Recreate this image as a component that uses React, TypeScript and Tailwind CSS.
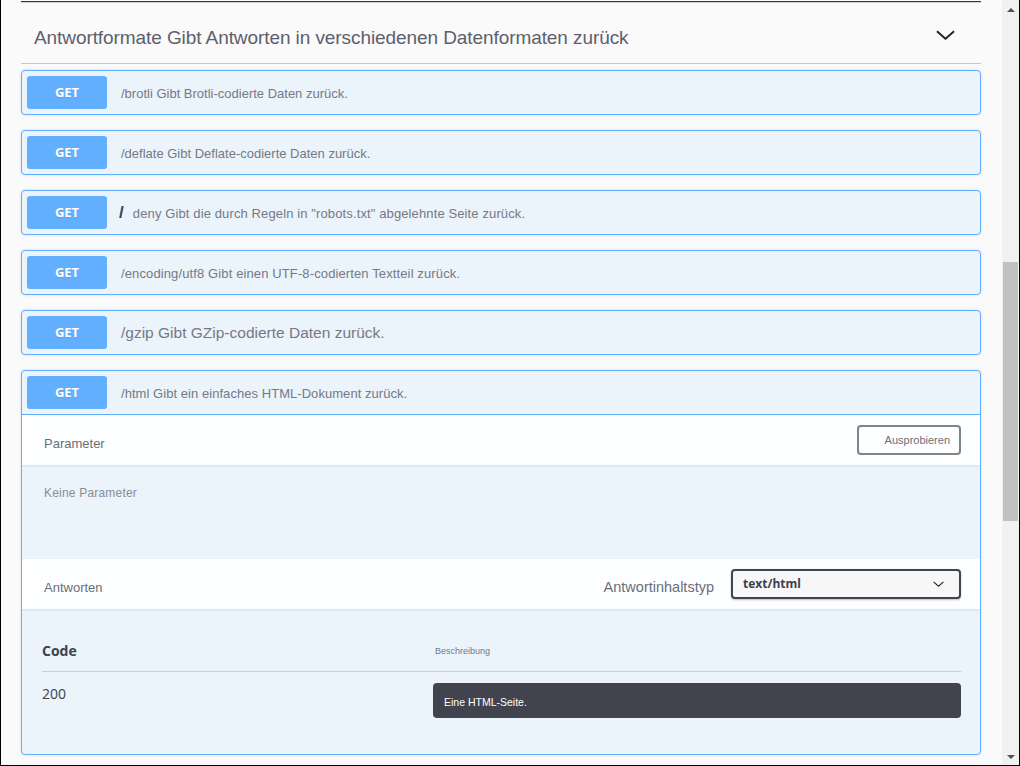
import React from "react";

const sans = "font-['Liberation_Sans',Arial,sans-serif]";
const open = "font-['Open_Sans',sans-serif]";

type Op = { path: React.ReactNode };

const ops: Op[] = [
  { path: <span className="text-[13px]">/brotli Gibt Brotli-codierte Daten zurück.</span> },
  { path: <span className="text-[13px]">/deflate Gibt Deflate-codierte Daten zurück.</span> },
  {
    path: (
      <span className="text-[13px] tracking-[0.12px]">
        <span className="-ml-[2px] mr-[9px] text-[17px] font-bold text-[#3b4151]">/</span>
        deny Gibt die durch Regeln in "robots.txt" abgelehnte Seite zurück.
      </span>
    ),
  },
  {
    path: (
      <span className="text-[13px] tracking-[0.12px]">/encoding/utf8 Gibt einen UTF-8-codierten Textteil zurück.</span>
    ),
  },
  { path: <span className="text-[15.5px]">/gzip Gibt GZip-codierte Daten zurück.</span> },
];

function Summary({ children, open: isOpen }: { children: React.ReactNode; open?: boolean }) {
  return (
    <div className={`flex items-center p-[5px] ${isOpen ? "border-b border-[#61affe]" : ""}`}>
      <div
        className={`${open} flex h-[33px] w-[80px] shrink-0 items-center justify-center rounded-[3px] bg-[#61affe] text-[13px] font-bold text-white [text-shadow:0_1px_0_rgba(0,0,0,0.1)]`}
      >
        GET
      </div>
      <div className={`${sans} ml-[14px] text-[#767985]`}>{children}</div>
    </div>
  );
}

function Chevron({ className }: { className?: string }) {
  return (
    <svg className={className} viewBox="0 0 20 10" fill="none" stroke="currentColor" strokeWidth={2}>
      <path d="M1 1l9 8 9-8" />
    </svg>
  );
}

function Scrollbar() {
  return (
    <div className="flex w-[17px] shrink-0 flex-col bg-[#f1f1f1]">
      <div className="flex h-[17px] items-center justify-center pt-[3px]">
        <div className="h-0 w-0 border-x-[4px] border-b-[4px] border-x-transparent border-b-[#505050]" />
      </div>
      <div className="h-[245px]" />
      <div className="mx-[1px] h-[259px] bg-[#c1c1c1]" />
      <div className="flex-1" />
      <div className="flex h-[17px] items-center justify-center">
        <div className="h-0 w-0 border-x-[4px] border-t-[4px] border-x-transparent border-t-[#505050]" />
      </div>
    </div>
  );
}

export default function App() {
  return (
    <div className="flex h-[766px] w-[1020px] overflow-hidden border-x border-b border-black bg-[#fafafa]">
      <main className="min-w-0 flex-1 overflow-hidden pl-[20px] pr-[21px]">
        <div className="mt-px h-px bg-[#3a3a3a]" />
        <div className="h-px bg-[#cfcfcf]" />

        <section className="flex h-[61px] items-center justify-between border-b border-[#c6c6c6] pt-[10px] pl-[13px] pr-[26px]">
          <h3 className={`${sans} text-[19px] tracking-[-0.08px] text-[#5c606c]`}>
            Antwortformate Gibt Antworten in verschiedenen Datenformaten zurück
          </h3>
          <Chevron className="mb-[6px] h-[10px] w-[19px] text-[#222]" />
        </section>

        <div className="mt-[6px] flex flex-col gap-[15px]">
          {ops.map((op, i) => (
            <div
              key={i}
              className="rounded-[4px] border border-[#61affe] bg-[#ebf3fb] shadow-[0_0_3px_rgba(0,0,0,0.12)]"
            >
              <Summary>{op.path}</Summary>
            </div>
          ))}

          <div className="overflow-hidden rounded-[4px] border border-[#61affe] bg-[#ebf3fb] shadow-[0_0_3px_rgba(0,0,0,0.12)]">
            <Summary open>
              <span className="text-[13px] tracking-[0.05px]">/html Gibt ein einfaches HTML-Dokument zurück.</span>
            </Summary>

            <div className="relative z-10 flex h-[50px] items-center justify-between bg-[#fdfeff] pl-[22px] pr-[19px] shadow-[0_1px_2px_rgba(0,0,0,0.1)]">
              <span className={`${sans} mt-[8px] text-[13px] text-[#6b6e79]`}>Parameter</span>
              <button
                className={`${sans} flex h-[30px] w-[104px] items-center justify-end rounded-[4px] border-2 border-[#838383] bg-transparent pr-[9px] text-[11px] text-[#6b6e79]`}
              >
                Ausprobieren
              </button>
            </div>

            <div className="h-[94px] pl-[22px] pt-[14px]">
              <span className={`${sans} text-[12px] tracking-[0.2px] text-[#8a8d96]`}>Keine Parameter</span>
            </div>

            <div className="relative z-10 flex h-[50px] items-center justify-between bg-[#fdfeff] pl-[22px] pr-[19px] shadow-[0_1px_2px_rgba(0,0,0,0.1)]">
              <span className={`${sans} mt-[8px] text-[13px] text-[#6b6e79]`}>Antworten</span>
              <div className="flex items-center">
                <span className={`${sans} mt-[8px] mr-[17px] text-[14.5px] text-[#6b6e79]`}>Antwortinhaltstyp</span>
                <div className="flex h-[30px] w-[230px] items-center justify-between rounded-[4px] border-2 border-[#41444e] bg-[#f7f7f7] pl-[10px] pr-[15px] shadow-[0_1px_2px_rgba(0,0,0,0.25)]">
                  <span className={`${open} text-[12px] font-bold text-[#3b4151]`}>text/html</span>
                  <Chevron className="h-[6px] w-[11px] text-[#222]" />
                </div>
              </div>
            </div>

            <div className="pb-[36px] pl-[20px] pr-[19px] pt-[21px]">
              <div className="flex h-[42px] items-center border-b border-[#c9ced6]">
                <div className={`${open} w-[391px] text-[14px] font-bold text-[#3b4151]`}>Code</div>
                <div className={`${sans} mt-[2px] pl-[2px] text-[9px] text-[#777a85]`}>Beschreibung</div>
              </div>
              <div className="flex pt-[11px]">
                <div className={`${open} w-[391px] text-[14px] text-[#3b4151]`}>200</div>
                <div className="h-[35px] flex-1 rounded-[4px] bg-[#41444e] pl-[11px] pt-[14px]">
                  <span className={`${sans} block text-[10.5px] leading-none text-white`}>Eine HTML-Seite.</span>
                </div>
              </div>
            </div>
          </div>
        </div>
      </main>
      <Scrollbar />
    </div>
  );
}
